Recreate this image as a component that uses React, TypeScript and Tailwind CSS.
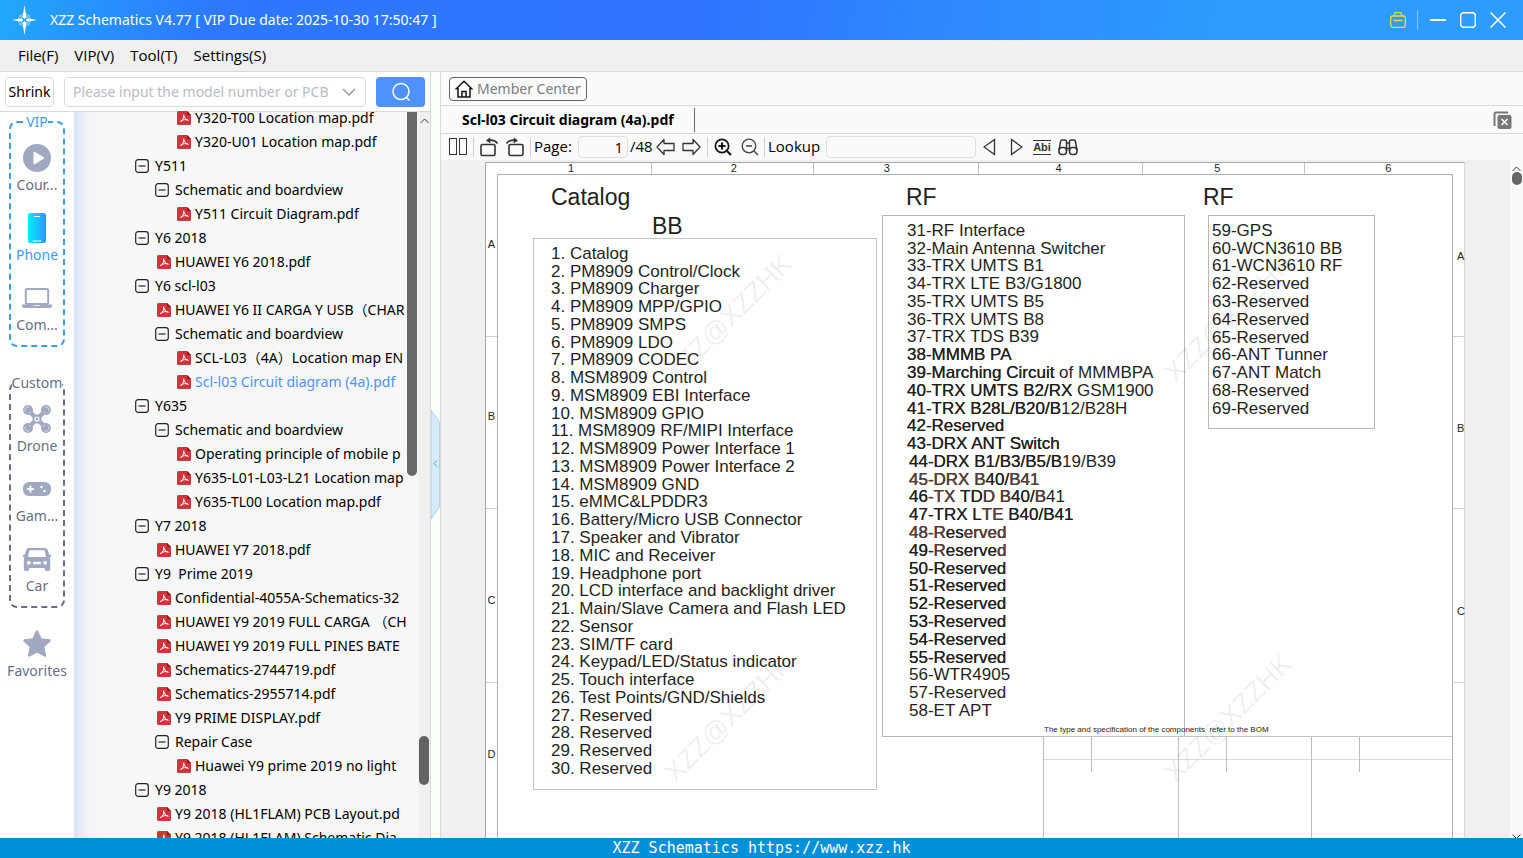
import { useState } from "react";

type Node = { kind: "folder" | "pdf"; level: number; text: string };

const tree: Node[] = [
  { kind: "pdf", level: 3, text: "Y320-T00 Location map.pdf" },
  { kind: "pdf", level: 3, text: "Y320-U01 Location map.pdf" },
  { kind: "folder", level: 1, text: "Y511" },
  { kind: "folder", level: 2, text: "Schematic and boardview" },
  { kind: "pdf", level: 3, text: "Y511 Circuit Diagram.pdf" },
  { kind: "folder", level: 1, text: "Y6 2018" },
  { kind: "pdf", level: 2, text: "HUAWEI Y6 2018.pdf" },
  { kind: "folder", level: 1, text: "Y6 scl-l03" },
  { kind: "pdf", level: 2, text: "HUAWEI Y6 II CARGA Y USB（CHAR" },
  { kind: "folder", level: 2, text: "Schematic and boardview" },
  { kind: "pdf", level: 3, text: "SCL-L03（4A）Location map EN" },
  { kind: "pdf", level: 3, text: "Scl-l03 Circuit diagram (4a).pdf" },
  { kind: "folder", level: 1, text: "Y635" },
  { kind: "folder", level: 2, text: "Schematic and boardview" },
  { kind: "pdf", level: 3, text: "Operating principle of mobile p" },
  { kind: "pdf", level: 3, text: "Y635-L01-L03-L21 Location map" },
  { kind: "pdf", level: 3, text: "Y635-TL00 Location map.pdf" },
  { kind: "folder", level: 1, text: "Y7 2018" },
  { kind: "pdf", level: 2, text: "HUAWEI Y7 2018.pdf" },
  { kind: "folder", level: 1, text: "Y9  Prime 2019" },
  { kind: "pdf", level: 2, text: "Confidential-4055A-Schematics-32" },
  { kind: "pdf", level: 2, text: "HUAWEI Y9 2019 FULL CARGA （CH" },
  { kind: "pdf", level: 2, text: "HUAWEI Y9 2019 FULL PINES BATE" },
  { kind: "pdf", level: 2, text: "Schematics-2744719.pdf" },
  { kind: "pdf", level: 2, text: "Schematics-2955714.pdf" },
  { kind: "pdf", level: 2, text: "Y9 PRIME DISPLAY.pdf" },
  { kind: "folder", level: 2, text: "Repair Case" },
  { kind: "pdf", level: 3, text: "Huawei Y9 prime 2019 no light" },
  { kind: "folder", level: 1, text: "Y9 2018" },
  { kind: "pdf", level: 2, text: "Y9 2018 (HL1FLAM) PCB Layout.pd" },
  { kind: "pdf", level: 2, text: "Y9 2018 (HL1FLAM) Schematic Dia" },
];

const bbList = [
  "Catalog", "PM8909 Control/Clock", "PM8909 Charger", "PM8909 MPP/GPIO", "PM8909 SMPS",
  "PM8909 LDO", "PM8909 CODEC", "MSM8909 Control", "MSM8909 EBI Interface", "MSM8909 GPIO",
  "MSM8909 RF/MIPI Interface", "MSM8909 Power Interface 1", "MSM8909 Power Interface 2",
  "MSM8909 GND", "eMMC&LPDDR3", "Battery/Micro USB Connector", "Speaker and Vibrator",
  "MIC and Receiver", "Headphone port", "LCD interface and backlight driver",
  "Main/Slave Camera and Flash LED", "Sensor", "SIM/TF card", "Keypad/LED/Status indicator",
  "Touch interface", "Test Points/GND/Shields", "Reserved", "Reserved", "Reserved", "Reserved",
];

// n = normal, d = drawn twice, b = brown
type Part = ["n" | "d" | "b", string];

const rfList: Part[][] = [
  [["n", "31-RF Interface"]],
  [["n", "32-Main Antenna Switcher"]],
  [["n", "33-TRX UMTS B1"]],
  [["n", "34-TRX LTE B3/G1800"]],
  [["n", "35-TRX UMTS B5"]],
  [["n", "36-TRX UMTS B8"]],
  [["n", "37-TRX TDS B39"]],
  [["d", "38-MMMB PA"]],
  [["d", "39-Marching Circuit"], ["n", " of MMMBPA"]],
  [["d", "40-TRX UMTS B2/RX"], ["n", " GSM1900"]],
  [["d", "41-TRX B28L/B20/B"], ["n", "12/B28H"]],
  [["d", "42-Reserved"]],
  [["d", "43-DRX ANT Switch"]],
  [["d", "44-DRX B1/B3/B5/B"], ["n", "19/B39"]],
  [["b", "45-DRX B"], ["d", "40/"], ["b", "B41"]],
  [["d", "46"], ["b", "-TX "], ["d", "TD"], ["b", "D B"], ["d", "40/"], ["b", "B"], ["n", "41"]],
  [["d", "47-TRX L"], ["b", "TE"], ["d", " B40/B41"]],
  [["b", "48-R"], ["d", "es"], ["b", "erved"]],
  [["d", "49-"], ["b", "R"], ["d", "eserve"], ["b", "d"]],
  [["d", "50-Reserved"]],
  [["d", "51-Reserved"]],
  [["d", "52-Reserved"]],
  [["d", "53-Reserved"]],
  [["d", "54-Reserved"]],
  [["d", "55-Reserved"]],
  [["n", "56-WTR4905"]],
  [["n", "57-Reserved"]],
  [["n", "58-ET APT"]],
];

const tones = {
  n: "text-[#231f20]",
  d: "text-[#231f20] [text-shadow:0_0_0_currentColor]",
  b: "text-[#563f3a] [text-shadow:0_0_0_currentColor,0_0_0_currentColor]",
};

const rf2List = [
  "59-GPS", "60-WCN3610 BB", "61-WCN3610 RF", "62-Reserved", "63-Reserved", "64-Reserved",
  "65-Reserved", "66-ANT Tunner", "67-ANT Match", "68-Reserved", "69-Reserved",
];

const topRuler = [
  { label: "1", pad: "pl-[82px]" },
  { label: "2", pad: "pl-[79px]" },
  { label: "3", pad: "pl-[70px]" },
  { label: "4", pad: "pl-[76px]" },
  { label: "5", pad: "pl-[71px]" },
  { label: "6", pad: "pl-[80px]" },
];

const watermarks = [
  "left-[242px] top-[155px]",
  "left-[742px] top-[155px]",
  "left-[242px] top-[555px]",
  "left-[742px] top-[555px]",
];

function PdfIcon() {
  return (
    <svg width="14" height="14" viewBox="0 0 14 14" className="shrink-0">
      <path d="M1.5 0H10l4 4v8.5A1.5 1.5 0 0 1 12.500 14h-11A1.500 1.500 0 0 1 0 12.500v-11A1.500 1.500 0 0 1 1.500 0z" fill="#d0343c" />
      <path d="M10 0l4 4h-3a1 1 0 0 1-1-1z" fill="#8f1219" />
      <path d="M6.600 4.200c.8 2.500 1.800 4.200 4.400 5M3.500 10.600c2-.6 3.800-4 3.300-6.400M4.200 9.800c2-1.200 4-1.500 6.600-.8" fill="none" stroke="#fff" strokeWidth="1" strokeLinecap="round" />
    </svg>
  );
}

function ToggleIcon() {
  return (
    <svg width="14" height="14" viewBox="0 0 14 14" fill="none" stroke="#222" strokeWidth="1.200">
      <rect x=".7" y=".7" width="12.600" height="12.600" rx="2.500" />
      <path d="M3.500 7h7" />
    </svg>
  );
}

function CategoryIcon({ name }: { name: string }) {
  switch (name) {
    case "Cour...":
      return (
        <svg width="28" height="28" viewBox="0 0 28 28">
          <circle cx="14" cy="14" r="14" fill="#a0a9bf" />
          <path d="M10.500 8.500v11a.8.8 0 0 0 1.200.7l9-5.500a.8.8 0 0 0 0-1.400l-9-5.500a.8.8 0 0 0-1.200.7z" fill="#fff" />
        </svg>
      );
    case "Phone":
      return (
        <svg width="18" height="30" viewBox="0 0 18 30">
          <defs>
            <linearGradient id="phone" x1="0" y1="0" x2="1" y2="0">
              <stop offset="0" stopColor="#00f0fc" />
              <stop offset="1" stopColor="#2f95fd" />
            </linearGradient>
          </defs>
          <rect width="18" height="30" rx="2.500" fill="url(#phone)" />
          <path d="M6.500 3.500h5" stroke="#fff" strokeLinecap="round" />
          <path d="M5 28h8" stroke="#fff" strokeLinecap="round" />
        </svg>
      );
    case "Com...":
      return (
        <svg width="30" height="20" viewBox="0 0 30 20">
          <rect x="3.800" y="1" width="22.400" height="15" rx="1.500" fill="none" stroke="#a0a9bf" strokeWidth="2" />
          <path d="M0 16.500h11c.5 1 1 1.200 2 1.200h4c1 0 1.500-.2 2-1.200h11v1.500a2 2 0 0 1-2 2H2a2 2 0 0 1-2-2z" fill="#a0a9bf" />
        </svg>
      );
    case "Drone":
      return (
        <svg width="28" height="28" viewBox="0 0 28 28">
          <path d="M5 5l18 18M23 5L5 23" stroke="#a0a9bf" strokeWidth="4.500" strokeLinecap="round" />
          <g fill="#a0a9bf">
            <circle cx="5" cy="5" r="5" />
            <circle cx="23" cy="5" r="5" />
            <circle cx="5" cy="23" r="5" />
            <circle cx="23" cy="23" r="5" />
            <circle cx="14" cy="14" r="4.500" />
          </g>
          <g fill="none" stroke="#fff" strokeOpacity=".7" strokeWidth=".8">
            <path d="M2.200 6.500a3.300 3.300 0 0 1 4-4.500M7.800 6.500a3.300 3.300 0 0 1-2 1.600" />
            <path d="M25.800 6.500a3.300 3.300 0 0 0-4-4.500M20.200 6.500a3.300 3.300 0 0 0 2 1.600" />
            <path d="M2.200 21.500a3.300 3.300 0 0 0 4 4.500M7.800 21.500a3.300 3.300 0 0 0-2-1.600" />
            <path d="M25.800 21.500a3.300 3.300 0 0 1-4 4.500M20.200 21.500a3.300 3.300 0 0 1 2-1.600" />
            <circle cx="14" cy="14" r="2" strokeOpacity="1" strokeWidth="1.200" />
          </g>
        </svg>
      );
    case "Gam...":
      return (
        <svg width="28" height="14" viewBox="0 0 28 14">
          <rect width="28" height="14" rx="6" fill="#a0a9bf" />
          <path d="M7.500 3.500v7M4 7h7" stroke="#fff" strokeWidth="1.800" />
          <circle cx="18.500" cy="5" r="1.200" fill="#fff" />
          <circle cx="21.500" cy="9" r="1.200" fill="#fff" />
        </svg>
      );
    case "Car":
      return (
        <svg width="28" height="23" viewBox="0 0 28 23">
          <path d="M6 0h16a3 3 0 0 1 2.800 2L26 6.500h1a1 1 0 0 1 1 1v.8a1 1 0 0 1-1 1h-.4l.6 2.200V21a2 2 0 0 1-2 2h-1.500a2 2 0 0 1-2-2v-1H6.300v1a2 2 0 0 1-2 2H2.800a2 2 0 0 1-2-2v-9.500l.6-2.200H1a1 1 0 0 1-1-1v-.8a1 1 0 0 1 1-1h1L3.200 2A3 3 0 0 1 6 0z" fill="#a0a9bf" />
          <path d="M6.500 2.200h15l1.300 5.500v1.300H5.200V7.700z" fill="#fff" />
          <circle cx="5.800" cy="14.800" r="1.900" fill="#fff" />
          <circle cx="22.200" cy="14.800" r="1.900" fill="#fff" />
          <rect x="10" y="13.800" width="8" height="2.400" rx=".5" fill="#fff" />
        </svg>
      );
    default:
      return (
        <svg width="28" height="28" viewBox="0 0 28 28">
          <path d="M14 1.500l3.700 8 8.800 1-6.500 6 1.800 9L14 21.200 6.200 25.500l1.800-9-6.500-6 8.800-1z" fill="#a0a9bf" stroke="#a0a9bf" strokeWidth="2.500" strokeLinejoin="round" />
        </svg>
      );
  }
}

function Category({ name, active }: { name: string; active?: boolean }) {
  return (
    <button className={`flex w-full flex-col items-center ${active ? "text-[#3b9bf5]" : "text-[#686f82]"}`}>
      <span className="flex h-[34px] items-center">
        <CategoryIcon name={name} />
      </span>
      <span className="leading-5">{name}</span>
    </button>
  );
}

function Chevron({ down }: { down?: boolean }) {
  return (
    <svg width="9" height="6" viewBox="0 0 9 6" fill="none" stroke="#333">
      <path d={down ? "M.5 .5l4 4 4-4" : "M.5 5l4-4 4 4"} />
    </svg>
  );
}

function RulerCell({ label, size }: { label: string; size: string }) {
  return <div className={`w-full shrink-0 border-b border-[#cfcfcf] text-center leading-3 ${size}`}>{label}</div>;
}

function Sheet() {
  return (
    <div className="relative mt-0.5 mr-[45px] ml-11 flex min-w-[900px] flex-1 flex-col border-l border-r border-t border-[#a8a8a8] border-r-[#d8d8d8] bg-white font-['Liberation_Sans',Arial,sans-serif] text-[#231f20]">
      {/* Column numbers */}
      <div className="grid h-[11px] shrink-0 grid-cols-[166fr_162fr_166fr_164fr_162fr_159fr] text-[11px] leading-[11px]">
        {topRuler.map((c) => (
          <div key={c.label} className={`border-r border-[#c4c4c4] last:border-r-0 ${c.pad}`}>{c.label}</div>
        ))}
      </div>

      <div className="flex min-h-0 flex-1">
        <div className="flex w-[11px] shrink-0 flex-col text-[11px]">
          <RulerCell label="A" size="h-[163px] pt-[64px]" />
          <RulerCell label="B" size="h-[172px] pt-[73px]" />
          <RulerCell label="C" size="h-[174px] pt-[85px]" />
          <RulerCell label="D" size="pt-[65px] border-b-0" />
        </div>

        <div className="flex min-w-0 flex-1 border-l border-r border-t border-[#b0b0b0] pl-[35px]">
          <section className="w-[344px] shrink-0 pt-[11px]">
            <h2 className="pl-[18px] text-[23px] leading-[23px]">Catalog</h2>
            <h3 className="mt-1.5 pl-[119px] text-[23px] leading-[23px]">BB</h3>
            <div className="border border-[#c4c4c4] pt-1.5 pb-[11px] pl-[17px]">
              <ol className="flex h-[533px] flex-col text-[17px]">
                {bbList.map((t, i) => (
                  <li key={i} className="flex min-h-0 flex-1 items-center whitespace-pre">{`${i + 1}. ${t}`}</li>
                ))}
              </ol>
            </div>
          </section>

          <div className="ml-[5px] flex min-w-0 flex-1 flex-col">
            <div className="flex items-start gap-[23px]">
              <section className="w-[303px] shrink-0 pt-[11px]">
                <h2 className="pl-6 text-[23px] leading-[23px]">RF</h2>
                <div className="mt-1.5 border border-[#b8b8b8] pt-1.5 pb-4 pl-6">
                  <ul className="flex h-[498px] flex-col text-[17px]">
                    {rfList.map((row, i) => (
                      <li key={i} className={`flex min-h-0 flex-1 items-center whitespace-pre ${i > 12 ? "pl-0.5" : ""}`}>
                        {row.map(([tone, t], k) => (
                          <span key={k} className={tones[tone]}>{t}</span>
                        ))}
                      </li>
                    ))}
                  </ul>
                </div>
              </section>

              <section className="w-[167px] shrink-0 pt-[11px]">
                <h2 className="-ml-[5px] text-[23px] leading-[23px]">RF</h2>
                <div className="mt-1.5 border border-[#b8b8b8] pt-1.5 pb-2.5 pl-[3px]">
                  <ul className="flex h-[196px] flex-col text-[17px]">
                    {rf2List.map((t) => (
                      <li key={t} className="flex min-h-0 flex-1 items-center whitespace-pre">{t}</li>
                    ))}
                  </ul>
                </div>
              </section>
            </div>

            {/* Title block */}
            <div className="relative -mt-px ml-[161px] flex flex-1 flex-col border-t border-[#c4c4c4]">
              <p className="absolute bottom-full left-px whitespace-pre text-[8px] leading-[14px]">
                The type and specification of the components  refer to the BOM
              </p>
              <div className="grid flex-1 grid-cols-[135fr_133fr_141fr]">
                {[0, 1, 2].map((i) => (
                  <div key={i} className="border-l border-[#bdbdbd]">
                    <div className="h-[23px] border-b border-[#dcdcdc]">
                      <div className="h-[35px] w-12 border-r border-[#bdbdbd]" />
                    </div>
                  </div>
                ))}
              </div>
            </div>
          </div>
        </div>

        <div className="flex w-[11px] shrink-0 flex-col text-[11px]">
          <RulerCell label="A" size="h-[163px] pt-[76px] pl-1" />
          <RulerCell label="B" size="h-[172px] pt-[85px] pl-1" />
          <RulerCell label="C" size="h-[174px] pt-[96px] pl-1" />
        </div>
      </div>

      {watermarks.map((pos) => (
        <div key={pos} className={`pointer-events-none absolute flex h-0 w-0 items-center justify-center ${pos}`}>
          <span className="-rotate-45 text-[27px] text-black/8">XZZ@XZZHK</span>
        </div>
      ))}
    </div>
  );
}

const sep = "h-5 w-px shrink-0 bg-[#cfcfcf]";

function ViewerToolbar() {
  const [page, setPage] = useState("1");
  return (
    <div className="flex h-[26px] shrink-0 items-center pl-2 font-['Open_Sans',sans-serif] text-[15px]">
      <button aria-label="Two pages">
        <svg width="18" height="18" viewBox="0 0 18 18" fill="none" stroke="#333">
          <rect x=".5" y=".5" width="7" height="16" />
          <rect x="10.500" y=".5" width="7" height="16" />
        </svg>
      </button>
      <div className={`ml-1.5 ${sep}`} />
      <button aria-label="Rotate left" className="ml-1.5">
        <svg width="19" height="20" viewBox="0 0 19 20" fill="none" stroke="#333" strokeWidth="1.600">
          <rect x="1" y="7.500" width="14" height="11" rx="1.500" />
          <path d="M7 3.500c5-1 8.500 0 10.500 3" />
          <path d="M10 .5L6 3.700l4.500 2.500" fill="#333" stroke="none" />
        </svg>
      </button>
      <button aria-label="Rotate right" className="ml-1.5">
        <svg width="19" height="20" viewBox="0 0 19 20" fill="none" stroke="#333" strokeWidth="1.600">
          <rect x="4" y="7.500" width="14" height="11" rx="1.500" />
          <path d="M12 3.500c-5-1-8.500 0-10.500 3" />
          <path d="M9 .5l4 3.200-4.500 2.500" fill="#333" stroke="none" />
        </svg>
      </button>
      <div className={`ml-1.5 ${sep}`} />
      <label htmlFor="page" className="ml-[3px] w-11">Page:</label>
      <input
        id="page"
        value={page}
        onChange={(e) => setPage(e.target.value)}
        className="h-[22px] w-[50px] rounded-sm border border-[#dedede] pr-1 text-right outline-none"
      />
      <span className="ml-0.5 w-[26px]">/48</span>
      <button aria-label="Previous page">
        <svg width="19" height="18" viewBox="0 0 19 18" fill="none" stroke="#333" strokeWidth="1.300" strokeLinejoin="round">
          <path d="M1 9l7-7.500v4h10v7H8v4z" />
        </svg>
      </button>
      <button aria-label="Next page" className="ml-[7px]">
        <svg width="19" height="18" viewBox="0 0 19 18" fill="none" stroke="#333" strokeWidth="1.300" strokeLinejoin="round">
          <path d="M18 9l-7-7.500v4H1v7h10v4z" />
        </svg>
      </button>
      <div className={`ml-1.5 ${sep}`} />
      <button aria-label="Zoom in" className="ml-1.5">
        <svg width="18" height="18" viewBox="0 0 18 18" fill="none" stroke="#111" strokeWidth="1.700">
          <circle cx="8" cy="8" r="6.600" />
          <path d="M13 13l4 4M4.500 8h7M8 4.500v7" strokeWidth="2" />
        </svg>
      </button>
      <button aria-label="Zoom out" className="ml-[9px]">
        <svg width="18" height="18" viewBox="0 0 18 18" fill="none" stroke="#444" strokeWidth="1.300">
          <circle cx="8" cy="8" r="6.800" />
          <path d="M13 13l4 4M5 8h6" strokeWidth="1.500" />
        </svg>
      </button>
      <div className={`ml-[5px] ${sep}`} />
      <label htmlFor="lookup" className="ml-[3px] w-[58px]">Lookup</label>
      <input id="lookup" className="h-[22px] w-[150px] rounded-sm border border-[#dedede] px-1 outline-none" />
      <button aria-label="Find previous" className="ml-[7px]">
        <svg width="13" height="18" viewBox="0 0 13 18" fill="none" stroke="#333" strokeWidth="1.300">
          <path d="M11.500 1.500v15L1 9z" />
        </svg>
      </button>
      <button aria-label="Find next" className="ml-3.5">
        <svg width="13" height="18" viewBox="0 0 13 18" fill="none" stroke="#333" strokeWidth="1.300">
          <path d="M1.500 1.500v15L12 9z" />
        </svg>
      </button>
      <button className="ml-2.5 w-[18px] border-y border-[#333] text-center font-['Liberation_Sans',sans-serif] text-[11px] leading-[13px] font-bold text-[#333]">
        Abi
      </button>
      <button aria-label="Search all" className="ml-[7px]">
        <svg width="20" height="17" viewBox="0 0 20 17" fill="none" stroke="#333" strokeWidth="1.500">
          <rect x="1" y="8.500" width="7.500" height="7" rx="3" />
          <rect x="11.500" y="8.500" width="7.500" height="7" rx="3" />
          <path d="M1 11.500L2.500 3a2 2 0 0 1 2-2H7a1.500 1.500 0 0 1 1.500 1.500V12M19 11.500L17.500 3a2 2 0 0 0-2-2H13a1.500 1.500 0 0 0-1.500 1.500V12M8.500 4h3M8 9.500h4" />
        </svg>
      </button>
    </div>
  );
}

export default function App() {
  const [selected, setSelected] = useState(11);

  return (
    <div className="flex h-screen flex-col overflow-hidden bg-white font-['Noto_Sans','Noto_Sans_CJK_SC',sans-serif] text-sm text-black">
      {/* Title bar */}
      <header className="flex h-10 shrink-0 items-center bg-[linear-gradient(100deg,#21a8fb_0%,#2d78fe_14%,#2f74ff_45%,#2d9cfd_80%)] pr-[17px] pl-3 text-white">
        <svg width="25" height="30" viewBox="0 0 25 30" fill="#fff">
          <circle cx="12.500" cy="15" r="6" fill="none" stroke="#fff" strokeOpacity=".5" />
          <path d="M12.500 0l2 12-2 2-2-2zM12.500 30l2-12-2-2-2 2zM0 15l9.500-1.800 1.800 1.800-1.800 1.800zM25 15l-9.500-1.800-1.800 1.800 1.800 1.800z" />
          <path d="M7.500 10l3 3M17.500 10l-3 3M7.500 20l3-3M17.500 20l-3-3" stroke="#fff" strokeOpacity=".7" />
        </svg>
        <h1 className="ml-[13px] flex-1 truncate">XZZ Schematics V4.77 [ VIP Due date: 2025-10-30 17:50:47 ]</h1>
        <button aria-label="Toolbox">
          <svg width="16" height="16" viewBox="0 0 16 16" fill="none" stroke="#e3dd3c" strokeWidth="1.300">
            <rect x=".7" y="4" width="14.600" height="11.300" rx="2" />
            <path d="M4.500 4V2a1.300 1.300 0 0 1 1.300-1.300h4.400A1.300 1.300 0 0 1 11.500 2v2M3.500 8.500h9" />
          </svg>
        </button>
        <div className="mr-3 ml-[11px] h-5 w-px bg-white/40" />
        <div className="flex items-center gap-3.5">
          <button aria-label="Minimize">
            <svg width="16" height="16" viewBox="0 0 16 16" stroke="#fff" strokeWidth="2"><path d="M0 8h16" /></svg>
          </button>
          <button aria-label="Maximize">
            <svg width="16" height="16" viewBox="0 0 16 16" fill="none" stroke="#fff" strokeWidth="1.400">
              <rect x=".7" y=".7" width="14.600" height="14.600" rx="3" />
            </svg>
          </button>
          <button aria-label="Close">
            <svg width="16" height="16" viewBox="0 0 16 16" stroke="#fff" strokeWidth="1.500"><path d="M.5 .5l15 15M15.500 .5l-15 15" /></svg>
          </button>
        </div>
      </header>

      {/* Menu */}
      <nav className="flex h-8 shrink-0 items-center gap-4 border-b border-[#d9d9d9] bg-[#f0f0f0] pl-[18px] font-['Open_Sans',sans-serif] text-[15px]">
        <button>File(F)</button>
        <button>VIP(V)</button>
        <button>Tool(T)</button>
        <button>Settings(S)</button>
      </nav>

      <main className="flex min-h-0 flex-1">
        {/* Left panel */}
        <aside className="flex w-[431px] shrink-0 flex-col border-r border-[#d9d9d9]">
          <div className="flex h-10 shrink-0 items-center border-b border-[#d9d9d9] px-[5px]">
            <button className="h-[30px] w-[49px] rounded border border-[#dcdcdc] bg-white">Shrink</button>
            <div className="ml-2.5 flex h-[30px] flex-1 items-center rounded border border-[#dcdcdc]">
              <input
                aria-label="Model number"
                placeholder="Please input the model number or PCB"
                className="h-full min-w-0 flex-1 pl-2 outline-none placeholder:text-[#b8bcc4]"
              />
              <svg width="14" height="8" viewBox="0 0 14 8" fill="none" stroke="#9a9a9a" strokeWidth="1.500" className="mr-[9px] ml-1.5">
                <path d="M1 1l6 6 6-6" />
              </svg>
            </div>
            <button aria-label="Search" className="ml-2.5 flex h-[30px] w-[49px] items-center justify-center rounded-sm bg-[#4f92fd]">
              <svg width="20" height="20" viewBox="0 0 20 20" fill="none" stroke="#fff" strokeWidth="1.500">
                <circle cx="10" cy="9.500" r="8" />
                <path d="M15 15l3.500 3.500" />
              </svg>
            </button>
          </div>

          <div className="flex min-h-0 flex-1">
            {/* Categories */}
            <div className="w-[74px] shrink-0 overflow-hidden">
              <fieldset className="mx-[9px] flex min-w-0 flex-col gap-4 rounded-lg border-2 border-dashed border-[#3b9bf5] pt-[9px] pb-2.5">
                <legend className="mx-auto text-center leading-5 text-[#3b9bf5]">VIP</legend>
                <Category name="Cour..." />
                <Category name="Phone" active />
                <Category name="Com..." />
              </fieldset>
              <fieldset className="mx-[9px] mt-[26px] flex min-w-0 flex-col gap-4 rounded-lg border-2 border-dashed border-[#686f82] pt-[9px] pb-2.5">
                <legend className="mx-auto text-center leading-5 text-[#686f82]">Custom</legend>
                <Category name="Drone" />
                <Category name="Gam..." />
                <Category name="Car" />
              </fieldset>
              <div className="mt-[19px]">
                <Category name="Favorites" />
              </div>
            </div>

            {/* File tree */}
            <div className="flex min-w-0 flex-1 bg-[linear-gradient(90deg,#d9e3f4_0px,#f0f3f8_14px,#f7f7f7_30px)]">
              <ul className="-mt-1.5 min-w-0 flex-1 overflow-hidden">
                {tree.map((n, i) => (
                  <li key={i} className={`h-6 ${n.level === 1 ? "pl-[61px]" : n.level === 2 ? "pl-[81px]" : "pl-[101px]"}`}>
                    <button
                      onClick={() => setSelected(i)}
                      className={`flex h-6 items-center whitespace-pre ${n.kind === "pdf" ? "gap-1 pl-0.5" : "gap-1.5"} ${i === selected ? "text-[#4f92fd]" : ""}`}
                    >
                      {n.kind === "pdf" ? <PdfIcon /> : <ToggleIcon />}
                      {n.text}
                    </button>
                  </li>
                ))}
              </ul>
              <div className="w-[11px] shrink-0">
                <div className="h-[364px] w-2.5 rounded-b-full bg-[#686868]" />
              </div>
              <div className="flex w-3 shrink-0 flex-col items-center bg-[#f0f0f0] pt-1.5">
                <Chevron />
                <div className="mt-[612px] h-[49px] w-2.5 shrink-0 rounded-full bg-[#636363]" />
              </div>
            </div>
          </div>
        </aside>

        {/* Splitter */}
        <div className="w-[9px] shrink-0 bg-[#fafffa]">
          <button aria-label="Collapse panel" className="mt-[337px] block">
            <svg width="9" height="111" viewBox="0 0 9 111" fill="none">
              <path d="M0 1l8.500 12v85L0 110z" fill="#d8ebfd" stroke="#a4d3fb" />
              <path d="M6 51.500L3 54.500l3 3" stroke="#45a5f5" />
            </svg>
          </button>
        </div>

        {/* Viewer */}
        <section className="flex min-w-0 flex-1 flex-col border-l border-[#d9d9d9] bg-[#fafafa]">
          <div className="flex h-[34px] shrink-0 items-center border-b border-[#d9d9d9] pl-2">
            <button className="flex h-6 items-center gap-1 rounded border border-[#666] px-[5px] text-[#7d7d7d]">
              <svg width="18" height="18" viewBox="0 0 18 18" fill="none" stroke="#111" strokeWidth="1.500">
                <path d="M.5 9.500L9 1.200l8.500 8.300M3 8v9h12V8M7 17v-5.500h4V17" />
              </svg>
              Member Center
            </button>
          </div>
          <div className="flex h-7 shrink-0 items-center border-b border-[#d9d9d9] pr-[11px] pl-[21px]">
            <button className="pr-5 font-bold">Scl-l03 Circuit diagram (4a).pdf</button>
            <div className="h-6 w-px bg-[#666]" />
            <button aria-label="Close all tabs" className="ml-auto">
              <svg width="19" height="18" viewBox="0 0 19 18">
                <path d="M1.500 15V3a1.500 1.500 0 0 1 1.500-1.500h12" fill="none" stroke="#777" strokeWidth="2" />
                <rect x="4.500" y="4" width="14" height="14" rx="2" fill="#777" />
                <path d="M8.500 8l6 6M14.500 8l-6 6" stroke="#fff" strokeWidth="1.500" />
              </svg>
            </button>
          </div>
          <ViewerToolbar />
          <div className="flex min-h-0 flex-1 bg-[#f0f0f0]">
            <div className="flex min-w-0 flex-1 overflow-hidden">
              <Sheet />
            </div>
            <div className="flex w-[13px] shrink-0 flex-col items-center bg-[#fafafa] pt-1.5">
              <Chevron />
              <div className="h-[13px] w-2.5 rounded-full bg-[#666]" />
              <div className="mt-auto -mb-0.5">
                <Chevron down />
              </div>
            </div>
          </div>
        </section>
      </main>

      <footer className="h-5 shrink-0 bg-[#0090da] text-center font-['DejaVu_Sans_Mono',monospace] text-[15px] leading-5 text-white">
        XZZ Schematics https://www.xzz.hk
      </footer>
    </div>
  );
}
